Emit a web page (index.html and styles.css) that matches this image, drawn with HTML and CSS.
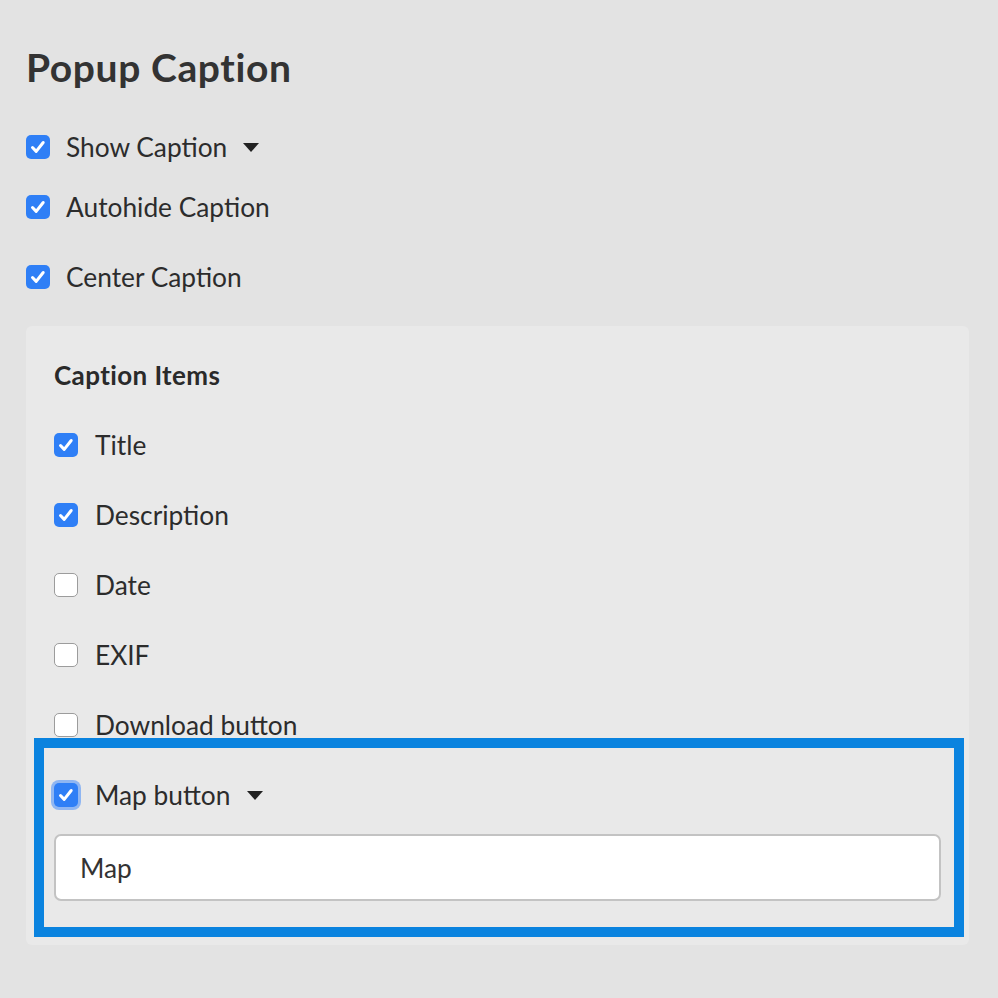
FILE: index.html
```html
<!DOCTYPE html>
<html lang="en">
<head>
<meta charset="utf-8">
<title>Popup Caption</title>
<link rel="stylesheet" href="styles.css">
</head>
<body>
<div class="page">
  <h1 class="title">Popup Caption</h1>

  <div class="row row-show">
    <span class="cb checked"><svg viewBox="0 0 24 24"><polyline points="6.5,12.5 10.2,16.4 17.2,7.5"/></svg></span>
    <span class="label">Show Caption</span>
    <span class="caret"></span>
  </div>
  <div class="row row-autohide">
    <span class="cb checked"><svg viewBox="0 0 24 24"><polyline points="6.5,12.5 10.2,16.4 17.2,7.5"/></svg></span>
    <span class="label">Autohide Caption</span>
  </div>
  <div class="row row-center">
    <span class="cb checked"><svg viewBox="0 0 24 24"><polyline points="6.5,12.5 10.2,16.4 17.2,7.5"/></svg></span>
    <span class="label">Center Caption</span>
  </div>

  <section class="panel">
    <h2 class="panel-title">Caption Items</h2>
    <div class="item">
      <span class="cb checked"><svg viewBox="0 0 24 24"><polyline points="6.5,12.5 10.2,16.4 17.2,7.5"/></svg></span>
      <span class="label">Title</span>
    </div>
    <div class="item">
      <span class="cb checked"><svg viewBox="0 0 24 24"><polyline points="6.5,12.5 10.2,16.4 17.2,7.5"/></svg></span>
      <span class="label">Description</span>
    </div>
    <div class="item">
      <span class="cb"></span>
      <span class="label">Date</span>
    </div>
    <div class="item">
      <span class="cb"></span>
      <span class="label">EXIF</span>
    </div>
    <div class="item">
      <span class="cb"></span>
      <span class="label">Download button</span>
    </div>
    <div class="group">
      <div class="item">
        <span class="cb checked focus"><svg viewBox="0 0 24 24"><polyline points="6.5,12.5 10.2,16.4 17.2,7.5"/></svg></span>
        <span class="label">Map button</span>
        <span class="caret"></span>
      </div>
      <div class="input">Map</div>
    </div>
  </section>
</div>
</body>
</html>
```

FILE: styles.css
```css
* { box-sizing: border-box; }

html, body {
  margin: 0;
  padding: 0;
  background: #e3e3e3;
}

body {
  font-family: "Lato", "Noto Sans", sans-serif;
  color: #2f2f2f;
}

.page {
  padding: 44px 28px 0 26px;
  width: 998px;
  height: 998px;
}

.title {
  margin: 0;
  font-size: 39px;
  line-height: 46px;
  font-weight: 700;
  color: #333;
  letter-spacing: 0.6px;
}

.row {
  display: flex;
  align-items: center;
  height: 40px;
  gap: 16px;
}

.row-show { margin-top: 37px; }
.row-autohide { margin-top: 20px; }
.row-center { margin-top: 30px; }

.label {
  font-size: 26.3px;
  line-height: 1;
  color: #2c2c2c;
}

.cb {
  flex: none;
  width: 24px;
  height: 24px;
  border-radius: 5px;
  background: #fff;
  border: 1.5px solid #9c9c9c;
  display: flex;
  align-items: center;
  justify-content: center;
}

.cb svg {
  width: 24px;
  height: 24px;
  display: block;
}

.cb polyline {
  fill: none;
  stroke: #fff;
  stroke-width: 3;
  stroke-linecap: round;
  stroke-linejoin: round;
}

.cb.checked {
  background: #2f7ff6;
  border: none;
}

.cb.focus {
  box-shadow: 0 0 0 3px #8fb6f2;
}

.caret {
  width: 0;
  height: 0;
  border-left: 8px solid transparent;
  border-right: 8px solid transparent;
  border-top: 9px solid #222;
  margin-left: 0;
}

.panel {
  margin-top: 29px;
  width: 943px;
  background: #e9e9e9;
  border-radius: 6px;
  padding: 14px 28px 44px 28px;
}

.panel-title {
  margin: 0;
  height: 70px;
  display: flex;
  align-items: center;
  font-size: 26px;
  font-weight: 700;
  color: #2a2a2a;
  letter-spacing: 0.4px;
}

.item {
  display: flex;
  align-items: center;
  height: 70px;
  gap: 17px;
}

.group {
  position: relative;
}

.group::after {
  content: "";
  position: absolute;
  top: -22px;
  left: -20px;
  right: -23px;
  bottom: -36px;
  border: 10px solid #0a83df;
  pointer-events: none;
}

.input {
  margin-top: 4px;
  height: 67px;
  background: #fff;
  border: 2px solid #c3c3c3;
  border-radius: 7px;
  padding-left: 24px;
  display: flex;
  align-items: center;
  font-size: 26.3px;
  color: #333;
}
```
